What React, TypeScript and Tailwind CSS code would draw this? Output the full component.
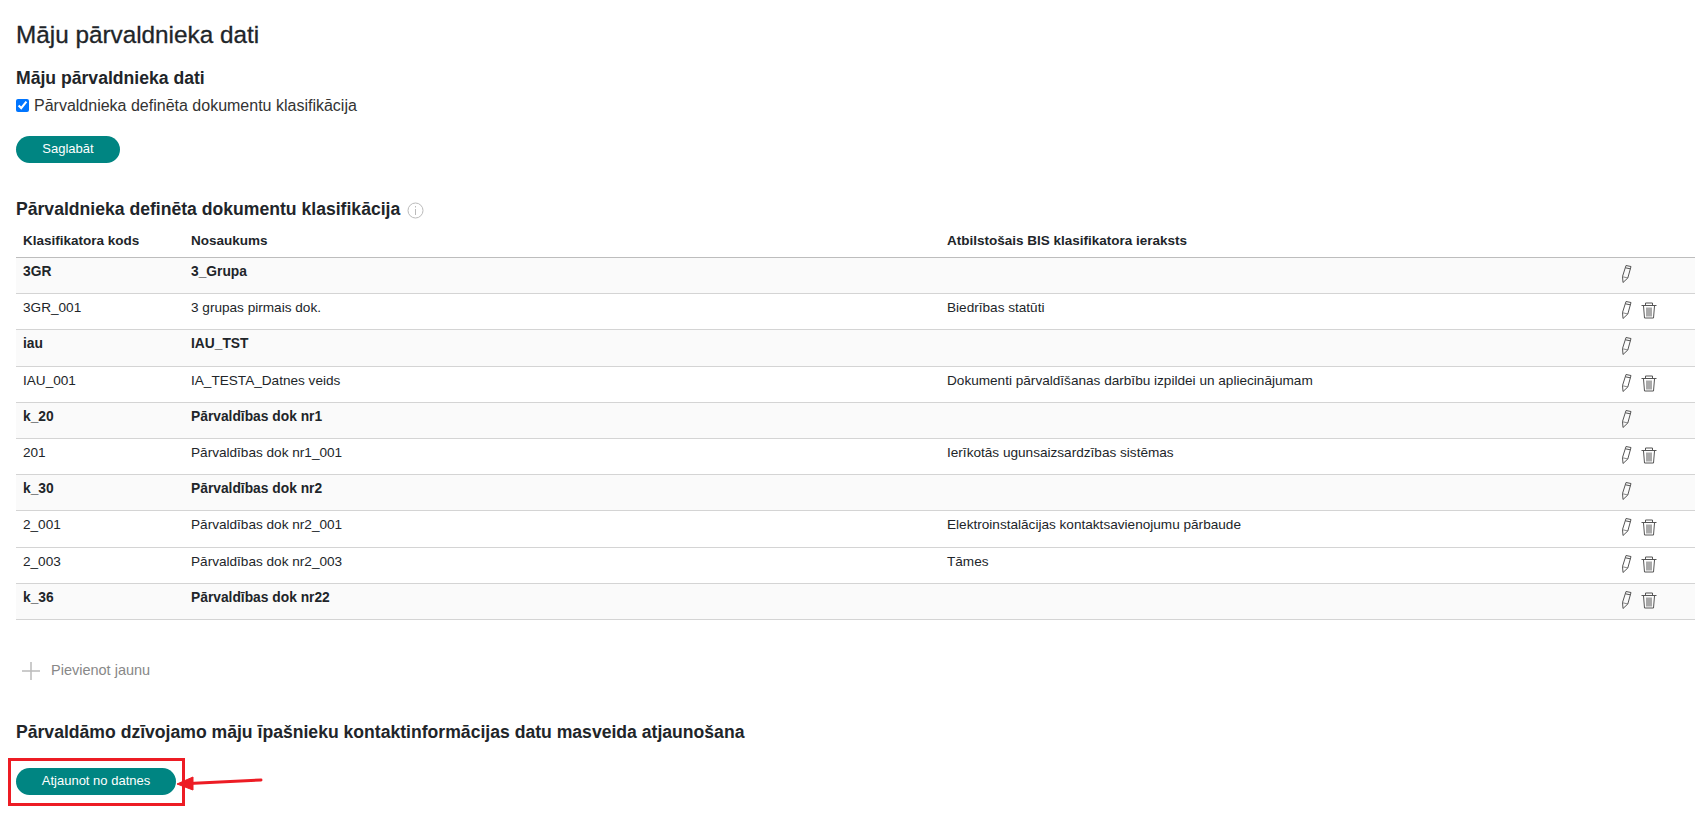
const rows: { code: string; name: string; bis: string; group: boolean; del: boolean }[] = [
  { code: "3GR", name: "3_Grupa", bis: "", group: true, del: false },
  { code: "3GR_001", name: "3 grupas pirmais dok.", bis: "Biedrības statūti", group: false, del: true },
  { code: "iau", name: "IAU_TST", bis: "", group: true, del: false },
  { code: "IAU_001", name: "IA_TESTA_Datnes veids", bis: "Dokumenti pārvaldīšanas darbību izpildei un apliecinājumam", group: false, del: true },
  { code: "k_20", name: "Pārvaldības dok nr1", bis: "", group: true, del: false },
  { code: "201", name: "Pārvaldības dok nr1_001", bis: "Ierīkotās ugunsaizsardzības sistēmas", group: false, del: true },
  { code: "k_30", name: "Pārvaldības dok nr2", bis: "", group: true, del: false },
  { code: "2_001", name: "Pārvaldības dok nr2_001", bis: "Elektroinstalācijas kontaktsavienojumu pārbaude", group: false, del: true },
  { code: "2_003", name: "Pārvaldības dok nr2_003", bis: "Tāmes", group: false, del: true },
  { code: "k_36", name: "Pārvaldības dok nr22", bis: "", group: true, del: true },
];

function Pencil() {
  return (
    <svg width="11" height="20" viewBox="0 0 11 20" fill="none" stroke="#555" strokeWidth="1" strokeLinejoin="round">
      <path d="M5 1.5 L10 2.5 L6.8 14 L2 18.5 L1.5 12.5 Z" />
      <path d="M4.4 3.8 L9.4 4.8" />
      <path d="M1.6 12.7 L6.8 14" strokeWidth="0.7" />
    </svg>
  );
}

function Trash() {
  return (
    <svg width="16" height="17" viewBox="0 0 16 17" fill="none" stroke="#555" strokeWidth="1">
      <path d="M0.5 3.5 H15.5" />
      <path d="M4.5 3 V1 H11.5 V3" />
      <path d="M2.5 4 L3.5 16 H12.5 L13.5 4" />
      <path d="M6 5.5 V14.5 M8 5.5 V14.5 M10 5.5 V14.5" />
    </svg>
  );
}

export default function App() {
  return (
    <div className="relative h-[816px] overflow-hidden bg-white pl-4 pr-[11px] font-['Liberation_Sans',Arial,sans-serif] text-[#212529]">
      <h1 className="pt-[21px] text-[24.3px] leading-[28px] [-webkit-text-stroke:0.3px_#212529]">Māju pārvaldnieka dati</h1>
      <h2 className="mt-[18px] text-[17.6px] font-bold leading-[22px]">Māju pārvaldnieka dati</h2>
      <label className="mt-[5px] flex h-[24px] items-center text-[16px] text-[#333]">
        <input type="checkbox" defaultChecked readOnly className="mb-[2px] mr-[5px] h-[13px] w-[13px] accent-[#0075ff]" />
        Pārvaldnieka definēta dokumentu klasifikācija
      </label>
      <button className="mt-[18px] block h-[27px] w-[104px] rounded-full bg-[#008582] pb-[2px] text-[13px] text-white">Saglabāt</button>
      <h2 className="mt-[34px] flex h-[24px] items-center text-[17.6px] font-bold">
        Pārvaldnieka definēta dokumentu klasifikācija
        <svg className="ml-[7px] mt-[2px]" width="17" height="17" viewBox="0 0 17 17" fill="none" stroke="#bbb">
          <circle cx="8.5" cy="8.5" r="7.5" />
          <path d="M8.5 7 V13 M8.5 4 V5.5" />
        </svg>
      </h2>
      <div className="mt-[7px] grid h-[30px] grid-cols-[168px_756px_1fr_78px] items-center border-b border-[#bdbdbd] pb-[3px] text-[13.5px] font-bold text-[#212529]">
        <div className="pl-[7px]">Klasifikatora kods</div>
        <div className="pl-[7px]">Nosaukums</div>
        <div className="pl-[7px]">Atbilstošais BIS klasifikatora ieraksts</div>
        <div />
      </div>
      {rows.map((r) => (
        <div
          key={r.code}
          className={`grid h-[36.2px] grid-cols-[168px_756px_1fr_78px] border-b border-[#d4d4d4] pt-[5px] leading-[18px] text-[#212529] ${
            r.group ? "bg-[#fafafa] text-[13.8px] font-bold" : "bg-white text-[13.6px]"
          }`}
        >
          <div className="pl-[7px]">{r.code}</div>
          <div className="pl-[7px]">{r.name}</div>
          <div className="pl-[7px]">{r.bis}</div>
          <div className="flex items-start gap-[9px] pl-[4px] pt-[1px] font-normal">
            <Pencil />
            {r.del && <div className="pt-[2px]"><Trash /></div>}
          </div>
        </div>
      ))}
      <div className="mt-[41px] flex h-[20px] items-center pl-[6px] text-[14.5px] text-[#888]">
        <svg width="18" height="18" viewBox="0 0 18 18" stroke="#bbb" strokeWidth="1.5">
          <path d="M9 0 V18 M0 9 H18" />
        </svg>
        <span className="ml-[11px]">Pievienot jaunu</span>
      </div>
      <h2 className="mt-[39px] text-[17.6px] font-bold leading-[24px]">
        Pārvaldāmo dzīvojamo māju īpašnieku kontaktinformācijas datu masveida atjaunošana
      </h2>
      <button className="mt-[24px] block h-[27px] w-[160px] rounded-full bg-[#008582] pb-[1px] text-[13px] text-white">Atjaunot no datnes</button>

      <div className="absolute left-[8px] top-[758px] h-[48px] w-[177px] border-[3px] border-[#ed1c24]" />
      <svg className="absolute left-[175px] top-[771px]" width="90" height="24" viewBox="0 0 90 24" fill="none">
        <path d="M86 9 L14 12.5" stroke="#ed1c24" strokeWidth="3" strokeLinecap="round" />
        <path d="M2 13 L18 6 L18 19 Z" fill="#ed1c24" stroke="#ed1c24" />
      </svg>
    </div>
  );
}
